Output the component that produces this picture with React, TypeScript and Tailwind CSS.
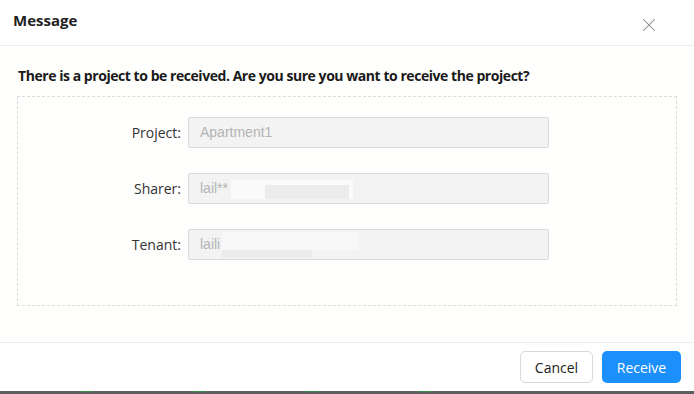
import { X } from 'lucide-react';

const rows = [
    { label: 'Project', value: 'Apartment1', blur: '' },
    { label: 'Sharer', value: 'lail**', blur: 'sharer' },
    { label: 'Tenant', value: 'laili', blur: 'tenant' },
];

export default function App() {
    return (
        <div className="w-[694px] h-[394px] bg-white flex flex-col overflow-hidden font-['Open_Sans','Liberation_Sans',sans-serif]">
            {/* Header */}
            <div className="h-[46px] shrink-0 flex items-center justify-between pl-[13px] pr-[34px] border-b border-[#ececec]">
                <h1 className="text-[15px] font-bold text-[#222] mt-[-5px]">Message</h1>
                <X className="w-[22px] h-[22px] text-[#8a8a8a] mt-[4px]" strokeWidth={1.1} />
            </div>

            {/* Body */}
            <div className="flex-1 bg-[#fefefd] px-[17px] pt-[21px]">
                <p className="text-[14px] font-bold text-[#1a1a1a] leading-[18px] pl-[1px] tracking-[-0.45px]">
                    There is a project to be received. Are you sure you want to receive the project?
                </p>
                <div className="mt-[11px] h-[210px] border border-dashed border-[#dcdcdc] pt-[20px] flex flex-col gap-[25px]">
                    {rows.map((row) => (
                        <div key={row.label} className="flex items-center">
                            <div className="w-[164px] text-right text-[14px] text-[#333] pr-[1px]">
                                {row.label}:
                            </div>
                            <div className="relative ml-[6px] w-[361px] h-[31px] bg-[#f3f3f3] border border-[#dadada] rounded-[2px] flex items-center px-[11px] text-[14px] text-[#b4b4b4] font-['Liberation_Sans',sans-serif]">
                                {row.value}
                                {row.blur === 'sharer' && (
                                    <div className="absolute left-[42px] top-[6px] w-[122px] h-[19px] bg-[#fafafa] flex">
                                        <div className="mt-[5px] ml-[34px] w-[84px] h-[14px] bg-[#ececec]" />
                                    </div>
                                )}
                                {row.blur === 'tenant' && (
                                    <div className="absolute left-[33px] top-[2px] w-[136px] h-[28px] flex flex-col">
                                        <div className="h-[18px] bg-[#f8f8f8]" />
                                        <div className="h-[8px] w-[90px] bg-[#ececec]" />
                                    </div>
                                )}
                            </div>
                        </div>
                    ))}
                </div>
            </div>

            {/* Footer */}
            <div className="h-[49px] shrink-0 border-t border-[#ececec] bg-white flex items-start justify-end gap-[9px] pt-[8px] pr-[13px]">
                <button className="w-[73px] h-[32px] rounded-[5px] border border-[#d9d9d9] bg-white text-[14px] text-[#222]">
                    Cancel
                </button>
                <button className="w-[79px] h-[32px] rounded-[5px] bg-[#1b8ffb] text-[14px] text-white">
                    Receive
                </button>
            </div>

            {/* Page behind the dialog */}
            <div className="h-[3px] shrink-0 bg-[#5f5f5f] relative overflow-hidden">
                <div className="absolute left-[79px] top-[-1px] w-[14px] h-[2px] bg-[#3d8a4c]" />
                <div className="absolute left-[192px] top-[-1px] w-[14px] h-[2px] bg-[#3d8a4c]" />
                <div className="absolute left-[305px] top-[-1px] w-[14px] h-[2px] bg-[#3d8a4c]" />
                <div className="absolute left-[418px] top-[-1px] w-[14px] h-[2px] bg-[#3d8a4c]" />
            </div>
        </div>
    );
}
